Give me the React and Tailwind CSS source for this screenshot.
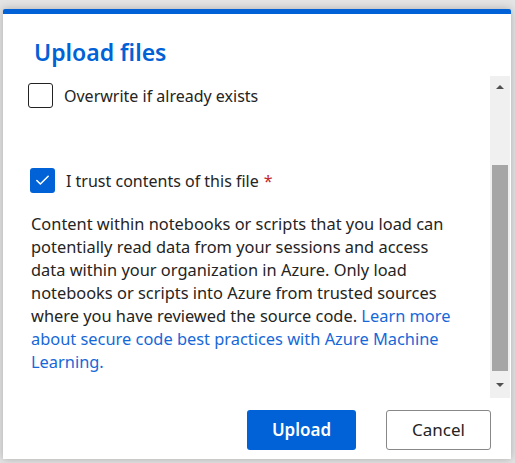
import { Check } from "lucide-react";

const font = { fontFamily: '"Noto Sans", "Open Sans", sans-serif' };

function Checkbox({ checked, label, required }) {
  return (
    <label className="flex items-center gap-[11px]">
      {checked ? (
        <span className="w-[25px] h-[25px] rounded-[3px] bg-[#0062d6] flex items-center justify-center">
          <Check className="w-[17px] h-[17px] text-white" strokeWidth={2.2} />
        </span>
      ) : (
        <span className="w-[25px] h-[25px] rounded-[3px] border border-[#222] bg-white" />
      )}
      <span className="text-[16px] text-[#252423]">
        {label}
        {required && <span className="text-[#c4262e] ml-[5px]">*</span>}
      </span>
    </label>
  );
}

function FakeScrollbar() {
  return (
    <div className="w-[20px] bg-[#f0f0f0] flex flex-col items-center">
      <div className="h-[22px] flex items-center justify-center">
        <div className="w-0 h-0 border-l-[4px] border-r-[4px] border-b-[4px] border-l-transparent border-r-transparent border-b-[#505050]" />
      </div>
      <div className="h-[67px]" />
      <div className="w-[16px] h-[206px] bg-[#a6a6a6]" />
      <div className="flex-1 flex items-center justify-center">
        <div className="w-0 h-0 border-l-[4px] border-r-[4px] border-t-[4px] border-l-transparent border-r-transparent border-t-[#505050]" />
      </div>
    </div>
  );
}

export default function App() {
  return (
    <div className="w-[515px] h-[463px] bg-[#e4e4e4] overflow-hidden pl-[3px] pt-[9px]" style={font}>
      <div className="w-[508px] h-[450px] bg-white border-t-[5px] border-[#0062d6] rounded-t-[2px] shadow-[0_0_8px_rgba(0,0,0,0.25)] flex flex-col">
        <h1 className="pl-[31px] pt-[22px] h-[62px] text-[23px] font-semibold text-[#0062d6] leading-[32px]">
          Upload files
        </h1>
        <div className="flex h-[322px]">
          <div className="flex-1 pl-[25px] pt-[7px]">
            <Checkbox label="Overwrite if already exists" />
            <div className="h-[60px]" />
            <div className="pl-[2px]">
              <Checkbox checked label="I trust contents of this file" required />
            </div>
            <p className="mt-[19px] pl-[3px] text-[16.4px] leading-[23px] text-[#252423]">
              Content within notebooks or scripts that you load can
              <br />
              potentially read data from your sessions and access
              <br />
              data within your organization in Azure. Only load
              <br />
              notebooks or scripts into Azure from trusted sources
              <br />
              where you have reviewed the source code.{" "}
              <a className="text-[#1668d8]">
                Learn more
                <br />
                about secure code best practices with Azure Machine
                <br />
                Learning.
              </a>
            </p>
          </div>
          <FakeScrollbar />
          <div className="w-[1px]" />
        </div>
        <div className="flex justify-end gap-[30px] pr-[20px] pt-[12px]">
          <button className="w-[109px] h-[40px] rounded-[3px] bg-[#0062d6] text-white text-[17px] font-semibold">
            Upload
          </button>
          <button className="w-[105px] h-[40px] rounded-[3px] border border-[#8a8886] bg-white text-[#252423] text-[17px]">
            Cancel
          </button>
        </div>
      </div>
    </div>
  );
}
